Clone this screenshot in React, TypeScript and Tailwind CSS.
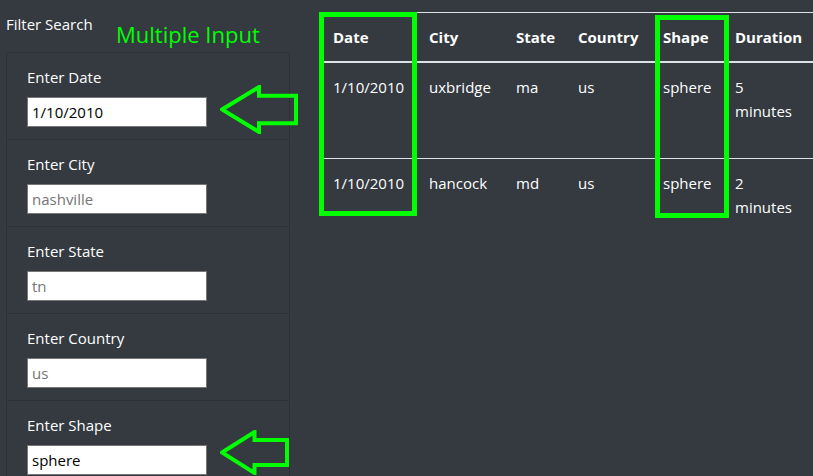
import React from "react";

const filters = [
  { label: "Enter Date", value: "1/10/2010", placeholder: "" },
  { label: "Enter City", value: "", placeholder: "nashville" },
  { label: "Enter State", value: "", placeholder: "tn" },
  { label: "Enter Country", value: "", placeholder: "us" },
  { label: "Enter Shape", value: "sphere", placeholder: "" },
];

const rows = [
  { date: "1/10/2010", city: "uxbridge", state: "ma", country: "us", shape: "sphere", duration: "5 minutes" },
  { date: "1/10/2010", city: "hancock", state: "md", country: "us", shape: "sphere", duration: "2 minutes" },
];

// стрелка-аннотация (только контур)
const Arrow = ({ w, h }: { w: number; h: number }) => {
  const headX = w * 0.5;
  const s1 = h * 0.22;
  const s2 = h * 0.78;
  return (
    <svg width={w} height={h} viewBox={`0 0 ${w} ${h}`}>
      <polygon
        points={`2,${h / 2} ${headX},2 ${headX},${s1} ${w - 2},${s1} ${w - 2},${s2} ${headX},${s2} ${headX},${h - 2}`}
        fill="none"
        stroke="#00ff00"
        strokeWidth="4"
        strokeLinejoin="miter"
      />
    </svg>
  );
};

const App = () => {
  return (
    <div className="relative w-[813px] h-[476px] overflow-hidden bg-[#343a40] text-white font-['Open_Sans',sans-serif] text-[15px] leading-6">
      <div className="flex">
        {/* Фильтры */}
        <div className="w-[284px] ml-[6px] shrink-0 pt-3">
          <p className="h-6">Filter Search</p>
          <ul className="mt-[16px] border border-[#2c3136] rounded">
            {filters.map((f) => (
              <li key={f.label} className="px-5 pt-3 pb-3 h-[87px] border-b border-[#2c3136]">
                <label className="block mb-2">{f.label}</label>
                <input
                  className="w-[180px] h-[30px] bg-white text-black px-1 border border-[#767676] placeholder:text-[#757575] outline-none"
                  defaultValue={f.value}
                  placeholder={f.placeholder}
                />
              </li>
            ))}
          </ul>
        </div>

        {/* Таблица */}
        <div className="ml-[31px] mt-3 shrink-0">
          <table className="table-fixed border-collapse w-[492px] text-left">
            <colgroup>
              <col className="w-[96px]" />
              <col className="w-[87px]" />
              <col className="w-[62px]" />
              <col className="w-[85px]" />
              <col className="w-[72px]" />
              <col className="w-[90px]" />
            </colgroup>
            <thead>
              <tr className="border-t border-[#dee2e6] border-b-2">
                {["Date", "City", "State", "Country", "Shape", "Duration"].map((h) => (
                  <th key={h} className="p-3 font-bold align-bottom">{h}</th>
                ))}
              </tr>
            </thead>
            <tbody>
              {rows.map((r, i) => (
                <tr key={i} className={i === 0 ? "h-[96px] border-b border-[#dee2e6]" : ""}>
                  <td className="p-3 align-top">{r.date}</td>
                  <td className="p-3 align-top">{r.city}</td>
                  <td className="p-3 align-top">{r.state}</td>
                  <td className="p-3 align-top">{r.country}</td>
                  <td className="p-3 align-top">{r.shape}</td>
                  <td className="p-3 align-top">{r.duration}</td>
                </tr>
              ))}
            </tbody>
          </table>
        </div>
      </div>

      {/* Зелёные пометки поверх скриншота */}
      <span className="absolute left-[116px] top-[20px] text-[22px] leading-7 text-[#00ff00]">Multiple Input</span>
      <div className="absolute left-[319px] top-[12px] w-[98px] h-[204px] border-[5px] border-[#00ff00]" />
      <div className="absolute left-[655px] top-[15px] w-[74px] h-[203px] border-[5px] border-[#00ff00]" />
      <div className="absolute left-[220px] top-[85px]">
        <Arrow w={78} h={49} />
      </div>
      <div className="absolute left-[220px] top-[430px]">
        <Arrow w={69} h={45} />
      </div>
    </div>
  );
};

export default App;
